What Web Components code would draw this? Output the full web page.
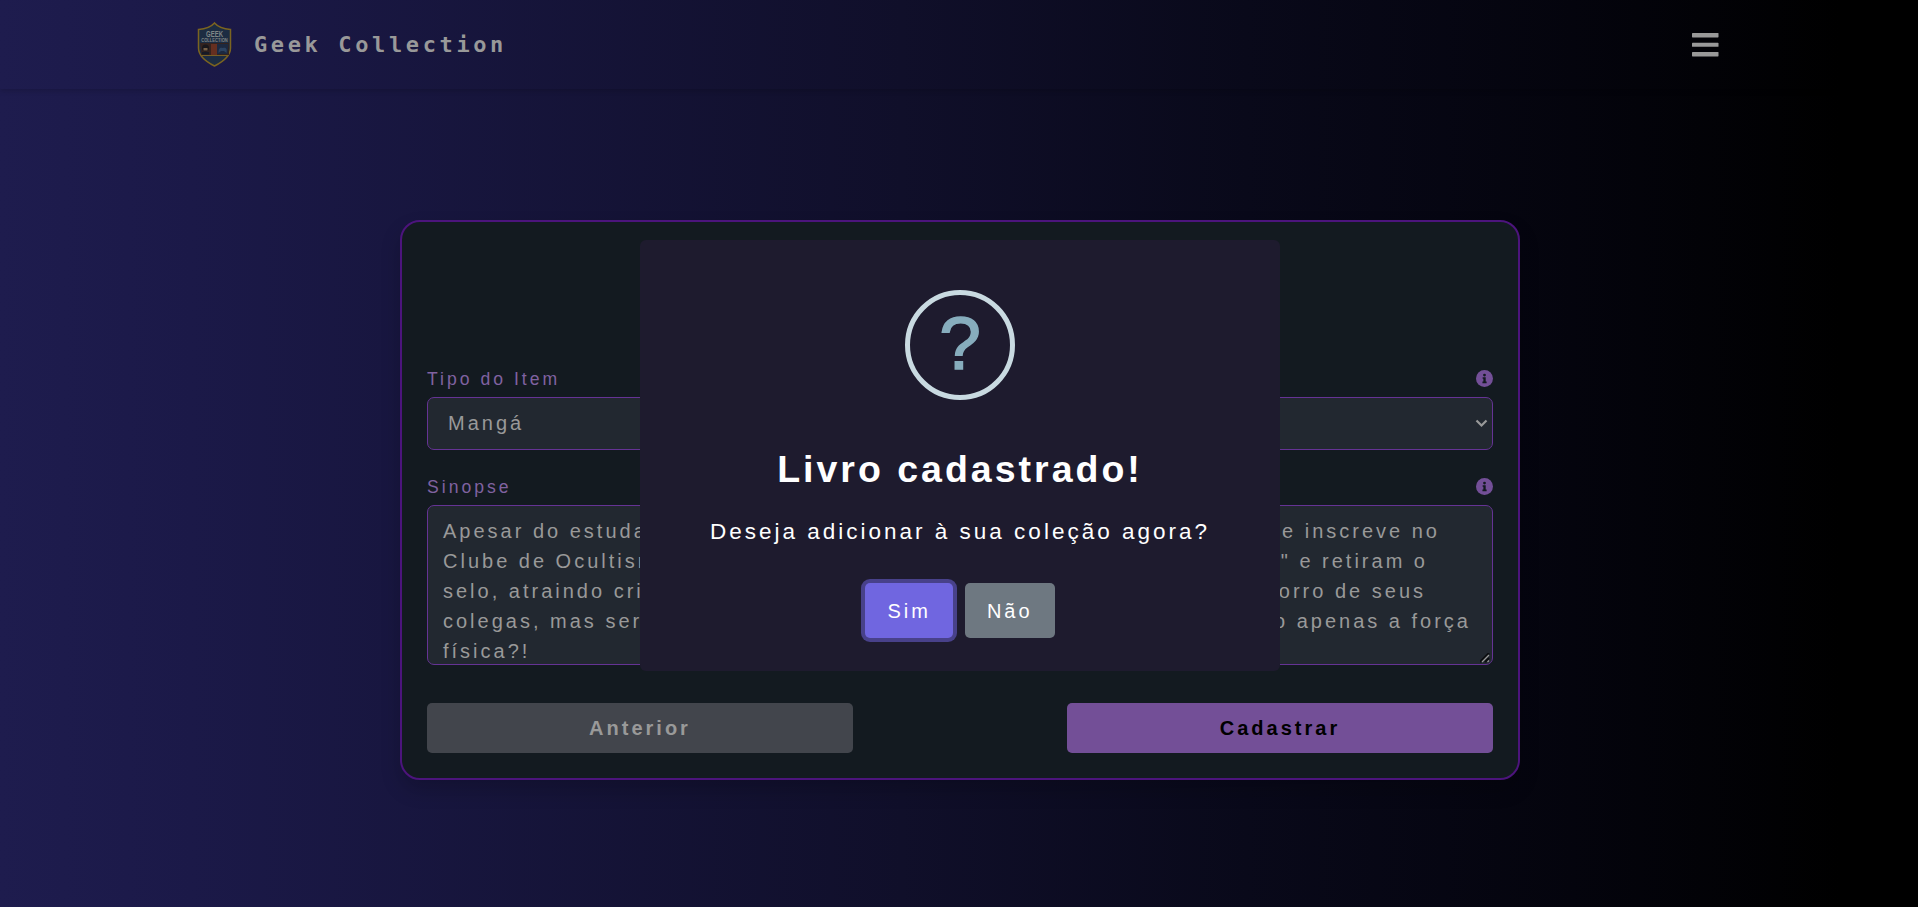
<!DOCTYPE html>
<html lang="pt-BR">
<head>
<meta charset="utf-8">
<title>Geek Collection</title>
<style>
body{margin:0;height:907px;overflow:hidden;font:20px/30px "Liberation Sans",Arial,sans-serif;letter-spacing:3px;color:#999;background:linear-gradient(to right,#1e1c4e 0%,#1b1948 10%,#100f2a 47%,#09091a 65%,#04040d 82%,#000 96%)}
</style>
</head>
<body>
<geek-app></geek-app>
<script>
const define=(name,html)=>customElements.define(name,class extends HTMLElement{
  constructor(){super();const t=document.createElement('template');t.innerHTML=html;this.attachShadow({mode:'open'}).append(t.content.cloneNode(true));}
});
define('geek-logo',`<style>:host{display:block;width:35px;height:45px}svg{display:block;overflow:visible}text{font:700 4.1px/1 "Liberation Sans",sans-serif;letter-spacing:0;fill:#7f8686}.g{font-size:6px}</style>
<svg width="35" height="45" viewBox="0 0 35 45">
<path d="M17.500 1C14 5 8 7 1.500 7.500V26c0 8 8 14 16 18 8-4 16-10 16-18V7.500C27 7 21 5 17.500 1Z" fill="#1c2c42" stroke="#7b6420" stroke-width="1.500"/>
<path d="M3 21h29v12H4.500Z" fill="#34231f"/><path d="M14 22h6v11h-6Z" fill="#652f20"/><path d="M20 22h11.500l-1 10H20Z" fill="#1c2940"/>
<path d="M4.500 33.500h26" stroke="#776026" stroke-width="1"/><circle cx="8.500" cy="26" r="3.500" fill="#19171b"/><path d="M6.500 26h4v2.500h-4Z" fill="#786047"/><path d="M5 32.500v-2.500h7v2.500Z" fill="#161a25"/>
<path d="M21.500 31c0-5 2-6 4-5 3-1 5 0 4 5l-2.500-2h-3Z" fill="#2c4361"/>
<text class="g" text-anchor="middle" transform="translate(17.5 14.500) scale(1 1.4)">GEEK</text>
<text text-anchor="middle" transform="translate(17.5 20) scale(1 1.4)">COLLECTION</text>
</svg>`);
define('geek-header',`<style>:host{display:flex;box-sizing:border-box;height:89px;padding:0 199px 0 197px;align-items:center;justify-content:space-between;box-shadow:0 2px 5px rgba(0,0,0,.16)}
.brand{display:flex;align-items:center;gap:22px;font:700 22px/30px "DejaVu Sans Mono",monospace;letter-spacing:3.62px}.menu{display:block;margin-bottom:-1px}</style>
<div class="brand"><geek-logo></geek-logo><span>Geek Collection</span></div>
<svg class="menu" width="28" height="27" viewBox="0 0 28 27" fill="#999"><rect x="1" y="1" width="26.500" height="4.400" rx=".6"/><rect x="1" y="10.800" width="26.500" height="4" rx=".6"/><rect x="1" y="20" width="26.500" height="4.400" rx=".6"/></svg>`);
define('form-field',`<style>:host{display:block}.l{display:flex;justify-content:space-between;align-items:center;height:27px;font-size:17.600px;color:#8062a0;margin-bottom:5px}svg{display:block}</style>
<div class="l"><slot name="label"></slot><svg width="17" height="17" viewBox="0 0 512 512"><circle cx="256" cy="256" r="256" fill="#734f97"/><path fill="#131a20" d="M256 110a42 42 0 1 0 0 84 42 42 0 0 0 0-84zM200 216h92v132h28v48H194v-48h28v-84h-22z"/></svg></div><slot></slot>`);
define('select-box',`<style>:host{display:flex;box-sizing:border-box;height:53px;border:1px solid #653394;border-radius:7px;background:#222830;padding:0 4px 1px 20px;align-items:center;justify-content:space-between}svg{display:block}</style>
<slot></slot><svg width="13" height="9" viewBox="0 0 13 9" fill="none" stroke="#999" stroke-width="2.200"><path d="M1.500 1.500l5 5 5-5"/></svg>`);
define('text-area',`<style>:host{display:block;position:relative;box-sizing:border-box;height:160px;border:1px solid #653394;border-radius:7px;background:#222830;padding:10px 15px;overflow:hidden;white-space:nowrap}svg{position:absolute;right:1px;bottom:1px}</style>
<slot></slot><svg width="11" height="10" viewBox="0 0 11 10"><path d="M0 9L9 0M5 9l4-4" stroke="#0b0d10" stroke-width="2"/><path d="M2 9l7-7M7.500 9L9 7.500" stroke="#999" stroke-width="1.300"/></svg>`);
define('text-line',`<style>:host{display:flex;justify-content:space-between;height:30px;width:var(--w,100%)}</style><slot></slot>`);
define('form-button',`<style>:host{display:flex;box-sizing:border-box;width:426px;height:50px;align-items:center;justify-content:center;border-radius:5px;font-weight:700;background:var(--bg);color:var(--fg)}</style><slot></slot>`);
define('item-card',`<style>:host{display:flex;flex-direction:column;box-sizing:border-box;width:1120px;height:560px;margin:131px 0 0 400px;padding:143px 25px 25px;border:2px solid #4c147c;border-radius:20px;background:#131a20;box-shadow:0 10px 20px rgba(0,0,0,.18)}
form-field+form-field{margin-top:23px}.actions{display:flex;justify-content:space-between;margin-top:38px}</style>
<form-field><span slot="label">Tipo do Item</span><select-box>Mangá</select-box></form-field>
<form-field><span slot="label">Sinopse</span><text-area>
<text-line style="--w:997px"><span>Apesar do estudante</span><span>se inscreve no</span></text-line>
<text-line style="--w:985px"><span>Clube de Ocultismo</span><span>" e retiram o</span></text-line>
<text-line style="--w:983px"><span>selo, atraindo criat</span><span>socorro de seus</span></text-line>
<text-line style="--w:1028px"><span>colegas, mas será</span><span>do apenas a força</span></text-line>
<text-line><span>física?!</span></text-line></text-area></form-field>
<div class="actions"><form-button style="--bg:#42454c;--fg:#999">Anterior</form-button><form-button style="--bg:#734f97;--fg:#000">Cadastrar</form-button></div>`);
define('dialog-button',`<style>:host{display:flex;box-sizing:border-box;height:55px;padding:0 22px;align-items:center;border-radius:5px;background:var(--bg);box-shadow:var(--ring,none)}</style><slot></slot>`);
define('confirm-dialog',`<style>:host{position:absolute;left:640px;top:240px;width:640px;height:431px;display:flex;flex-direction:column;align-items:center;border-radius:6px;background:#1e1b2e;color:#fff}
.icon{box-sizing:border-box;width:110px;height:110px;margin-top:50px;border:5px solid #c9dae1;border-radius:50%;display:flex;align-items:center;justify-content:center;font-size:75px;line-height:96px;padding-bottom:4px;letter-spacing:0;color:#87adbd;-webkit-text-stroke:1.500px #87adbd}
h2{margin:44px 0 0;font-size:37.5px;line-height:50px}p{margin:21px 0 0;font-size:22.5px;line-height:34px}.actions{display:flex;gap:12px;margin-top:34px}</style>
<div class="icon">?</div><h2>Livro cadastrado!</h2><p>Deseja adicionar à sua coleção agora?</p>
<div class="actions"><dialog-button style="--bg:#7066e0;--ring:0 0 0 4px #48418a">Sim</dialog-button><dialog-button style="--bg:#6e7881">Não</dialog-button></div>`);
define('geek-app',`<style>:host{display:block}</style><geek-header></geek-header><item-card></item-card><confirm-dialog></confirm-dialog>`);
</script>
</body>
</html>
